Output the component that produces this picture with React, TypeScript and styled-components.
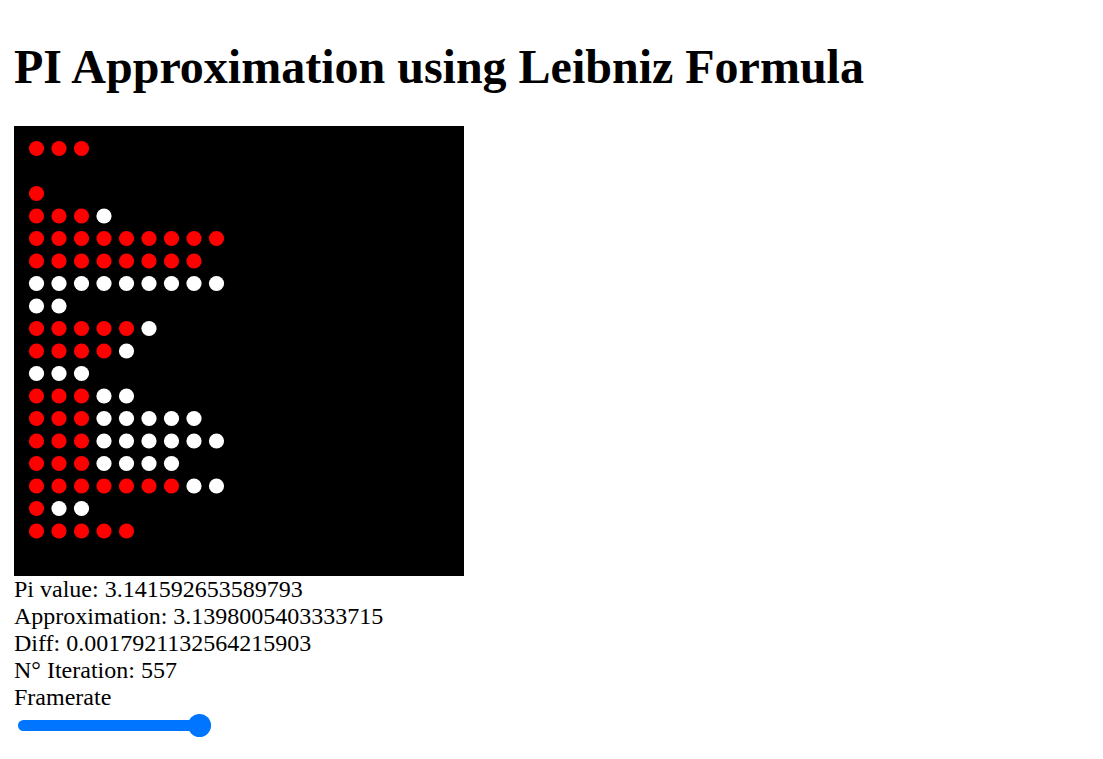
import React from "react";
import styled, { createGlobalStyle } from "styled-components";

const GlobalStyle = createGlobalStyle`
  html, body {
    margin: 0;
    padding: 0;
    background: #ffffff;
  }
  body {
    font-family: "Liberation Serif", "Times New Roman", serif;
    color: #000000;
  }
`;

const Page = styled.main`
  display: flex;
  flex-direction: column;
  align-items: flex-start;
  padding: 0 14px;
`;

const Title = styled.h1`
  margin: 39px 0 32px;
  font-size: 48px;
  line-height: 55px;
  font-weight: bold;
  white-space: nowrap;
`;

const Board = styled.div`
  width: 450px;
  height: 450px;
  background: #000000;
`;

const Stats = styled.div`
  display: flex;
  flex-direction: column;
  font-size: 24px;
  line-height: normal;
`;

const StatLine = styled.div`
  white-space: nowrap;
`;

const Slider = styled.input`
  -webkit-appearance: none;
  appearance: none;
  display: block;
  width: 193px;
  height: 23px;
  margin: 3px 0 0 4px;
  padding: 0;
  background: transparent;

  &::-webkit-slider-runnable-track {
    height: 11.5px;
    border-radius: 6px;
    background: #0075ff;
  }
  &::-webkit-slider-thumb {
    -webkit-appearance: none;
    appearance: none;
    width: 23px;
    height: 23px;
    border-radius: 50%;
    background: #0075ff;
    margin-top: -5.75px;
    border: none;
  }
`;

const PI = "3.141592653589793";
const APPROX = "3.1398005403333715";
const CELL = 22.5;
const RADIUS = 7.6;

type Dot = { x: number; y: number; color: string };

function buildDots(): Dot[] {
  const dots: Dot[] = [];
  for (let row = 0; row < APPROX.length; row++) {
    const a = APPROX[row];
    if (a === ".") continue;
    const av = parseInt(a, 10);
    const pc = PI[row];
    const pv = pc !== undefined && pc !== "." ? parseInt(pc, 10) : 0;
    const y = (row + 1) * CELL;
    for (let c = 0; c < av; c++) {
      dots.push({ x: (c + 1) * CELL, y, color: "#ff0000" });
    }
    for (let c = av; c < pv; c++) {
      dots.push({ x: (c + 1) * CELL, y, color: "#ffffff" });
    }
  }
  return dots;
}

export default function App() {
  const dots = buildDots();
  return (
    <>
      <GlobalStyle />
      <Page>
        <Title>PI Approximation using Leibniz Formula</Title>
        <Board>
          <svg width="450" height="450" viewBox="0 0 450 450">
            {dots.map((d, i) => (
              <circle key={i} cx={d.x} cy={d.y} r={RADIUS} fill={d.color} />
            ))}
          </svg>
        </Board>
        <Stats>
          <StatLine>Pi value: {PI}</StatLine>
          <StatLine>Approximation: {APPROX}</StatLine>
          <StatLine>Diff: 0.0017921132564215903</StatLine>
          <StatLine>N° Iteration: 557</StatLine>
          <StatLine>Framerate</StatLine>
        </Stats>
        <Slider type="range" min={1} max={60} defaultValue={60} aria-label="Framerate" />
      </Page>
    </>
  );
}
